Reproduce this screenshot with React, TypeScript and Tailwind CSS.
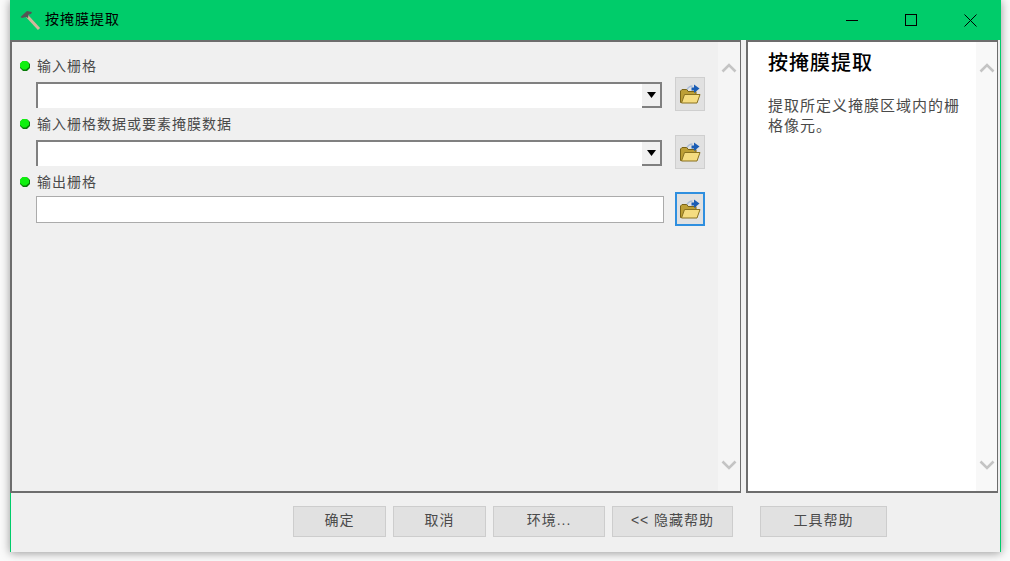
import React from "react";

const cjk = "font-['Liberation_Sans','Noto_Sans_CJK_SC',sans-serif]";

function Dot() {
  return (
    <svg width="12" height="12" viewBox="0 0 12 12" className="shrink-0">
      <polygon points="3.5,1.5 8.5,1.5 11,4 11,8 8,11 4,11 1,8 1,4" fill="#087a08" />
      <polygon points="3.5,1 7.5,1 10,3.5 10,7 7,9.5 4,9.5 1,7 1,3.5" fill="#0ff00f" />
    </svg>
  );
}

function FolderIcon() {
  return (
    <svg width="22" height="22" viewBox="0 0 22 22">
      <path d="M1.5 8 L1.5 19.5 L17 19.5 L17 8.5 L9 8.5 L8 6.5 L3 6.5 Z" fill="#bd9f36" stroke="#7a6418" strokeWidth="1" />
      <path d="M2.5 20 L5.5 11.5 L21 11.5 L18 20 Z" fill="#f5dc80" stroke="#8a7220" strokeWidth="1" />
      <path d="M8 6.5 Q10 3 13.5 3" fill="none" stroke="#a9bdd8" strokeWidth="1.4" />
      <path d="M12.5 7.5 L12.5 4.5 L15 4.5 L15 1.5 L20.5 5.5 L15 10 L15 7.5 Z" fill="#1a5db5" />
    </svg>
  );
}

function BrowseButton({ focused }: { focused?: boolean }) {
  return (
    <button
      className={
        focused
          ? "w-[30px] h-[34px] shrink-0 flex items-center justify-center bg-[#e1e1e1] border-2 border-[#2f8fdf]"
          : "w-[30px] h-[34px] shrink-0 flex items-center justify-center bg-[#e1e1e1] border border-[#cfcfcf]"
      }
    >
      <FolderIcon />
    </button>
  );
}

function ComboBox() {
  return (
    <div className="w-[626px] h-[26px] shrink-0 bg-white border-t-[2px] border-l-[2px] border-[#808080] flex justify-end">
      <div className="w-[20px] h-[24px] bg-[#f0f0f0] border-r-[2px] border-b-[2px] border-[#808080] flex items-center justify-center">
        <svg width="9" height="6" viewBox="0 0 9 6">
          <polygon points="0,0 9,0 4.5,6" fill="#000" />
        </svg>
      </div>
    </div>
  );
}

function Label({ text }: { text: string }) {
  return (
    <div className="h-[24px] flex items-center gap-[5px] pl-[7px] text-[14px] tracking-[1px] text-[#4a4a4a]">
      <Dot />
      <span className="ml-[1px]">{text}</span>
    </div>
  );
}

export default function App() {
  return (
    <div className={`w-[1010px] h-[561px] overflow-hidden bg-[#fafafa] pl-[10px] ${cjk}`}>
      <div className="w-[991px] h-[552px] flex flex-col bg-[#f0f0f0] shadow-[0_1px_9px_rgba(0,0,0,0.4)] border-x border-[#00cc6a] border-b-0">
        <div className="h-[40px] shrink-0 bg-[#00cc6a] flex items-center text-black -mx-px">
          <svg width="22" height="22" viewBox="0 0 22 22" className="ml-[9px] shrink-0">
            <path d="M8 7 L20 20" stroke="#d2b79c" strokeWidth="3" />
            <path d="M1.5 8 L8 2 L13 3 L12 5 L9.5 5.5 L9 9 L7 8 L3 9 Z" fill="#555" />
          </svg>
          <span className="ml-[4px] mb-[2px] text-[14px] tracking-[1px]">按掩膜提取</span>
          <div className="ml-auto flex items-center">
            <div className="w-[58px] h-[40px] flex items-center justify-center">
              <div className="w-[12px] h-[1px] bg-black" />
            </div>
            <div className="w-[58px] h-[40px] flex items-center justify-center ml-[1px]">
              <div className="w-[12px] h-[12px] border border-black" />
            </div>
            <div className="w-[61px] h-[40px] pr-[1px] flex items-center justify-center">
              <svg width="13" height="13" viewBox="0 0 13 13">
                <path d="M0.5 0.5 L12.5 12.5 M12.5 0.5 L0.5 12.5" stroke="#000" strokeWidth="1" />
              </svg>
            </div>
          </div>
        </div>

        <div className="h-[453px] shrink-0 flex -ml-px">
          <div className="w-[731px] shrink-0 flex border-2 border-r border-[#6d6d6d] bg-[#f0f0f0]">
            <div className="flex-1 min-w-0 pt-[12px]">
              <div className="h-[58px]">
                <Label text="输入栅格" />
                <div className="flex items-start gap-[13px] pl-[24px]">
                  <div className="mt-[4px]"><ComboBox /></div>
                  <div className="mt-[-1px]"><BrowseButton /></div>
                </div>
              </div>
              <div className="h-[58px]">
                <Label text="输入栅格数据或要素掩膜数据" />
                <div className="flex items-start gap-[13px] pl-[24px]">
                  <div className="mt-[4px]"><ComboBox /></div>
                  <div className="mt-[-1px]"><BrowseButton /></div>
                </div>
              </div>
              <div className="h-[58px]">
                <Label text="输出栅格" />
                <div className="flex items-start gap-[11px] pl-[24px]">
                  <div className="w-[628px] h-[27px] mt-[2px] shrink-0 bg-white border border-[#ababab]" />
                  <div className="mt-[-2px]"><BrowseButton focused /></div>
                </div>
              </div>
            </div>
            <div className="w-[22px] shrink-0 bg-[#f5f5f5] flex flex-col justify-between items-center py-[21px]">
              <svg width="16" height="10" viewBox="0 0 16 10">
                <path d="M1.5 8.5 L8 2 L14.5 8.5" fill="none" stroke="#c4c4c4" strokeWidth="2.6" />
              </svg>
              <svg width="16" height="10" viewBox="0 0 16 10">
                <path d="M1.5 1.5 L8 8 L14.5 1.5" fill="none" stroke="#c4c4c4" strokeWidth="2.6" />
              </svg>
            </div>
          </div>
          <div className="w-[5px] shrink-0" />
          <div className="w-[252px] shrink-0 flex border-2 border-r border-[#6d6d6d] bg-white">
            <div className="flex-1 min-w-0 pl-[20px] pr-[12px] pt-[7px]">
              <h1 className="text-[20px] leading-[28px] tracking-[1px] font-medium text-black">按掩膜提取</h1>
              <p className="mt-[19px] text-[15px] leading-[20px] tracking-[1px] text-[#4a4a4a]">
                提取所定义掩膜区域内的栅格像元。
              </p>
            </div>
            <div className="w-[21px] shrink-0 bg-[#f8f8f8] flex flex-col justify-between items-center py-[21px]">
              <svg width="16" height="10" viewBox="0 0 16 10">
                <path d="M1.5 8.5 L8 2 L14.5 8.5" fill="none" stroke="#c4c4c4" strokeWidth="2.6" />
              </svg>
              <svg width="16" height="10" viewBox="0 0 16 10">
                <path d="M1.5 1.5 L8 8 L14.5 1.5" fill="none" stroke="#c4c4c4" strokeWidth="2.6" />
              </svg>
            </div>
          </div>
        </div>

        <div className="flex-1 flex items-start pt-[13px] -ml-px">
          <div className="flex gap-[7px] ml-[283px]">
            <button className="w-[93px] h-[31px] shrink-0 pb-[2px] bg-[#e1e1e1] border border-[#cdcdcd] text-[14px] tracking-[1px] text-[#4a4a4a] flex items-center justify-center">确定</button>
            <button className="w-[93px] h-[31px] shrink-0 pb-[2px] bg-[#e1e1e1] border border-[#cdcdcd] text-[14px] tracking-[1px] text-[#4a4a4a] flex items-center justify-center">取消</button>
            <button className="w-[112px] h-[31px] shrink-0 pb-[2px] bg-[#e1e1e1] border border-[#cdcdcd] text-[14px] tracking-[1px] text-[#4a4a4a] flex items-center justify-center">环境...</button>
            <button className="w-[121px] h-[31px] shrink-0 pb-[2px] bg-[#e1e1e1] border border-[#cdcdcd] text-[14px] tracking-[1px] text-[#4a4a4a] flex items-center justify-center">{"<< 隐藏帮助"}</button>
          </div>
          <button className="ml-[27px] w-[127px] h-[31px] shrink-0 pb-[2px] bg-[#e1e1e1] border border-[#cdcdcd] text-[14px] tracking-[1px] text-[#4a4a4a] flex items-center justify-center">工具帮助</button>
        </div>
      </div>
    </div>
  );
}
